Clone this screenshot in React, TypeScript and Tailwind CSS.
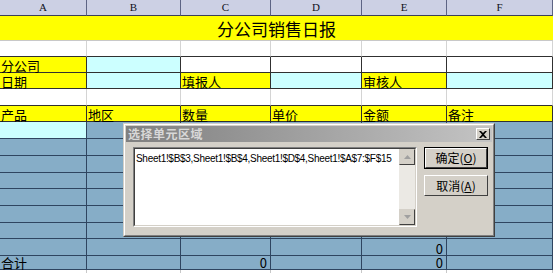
import React from "react";

const cols = ["A", "B", "C", "D", "E", "F"];

type C = { t?: string; cls: string; right?: boolean };

const Y = "bg-[#ffff00]";
const CY = "bg-[#ccffff]";
const W = "bg-white";
const BL = "bg-[#86adc7]";

function Cell({ c }: { c: C }) {
  return (
    <div
      className={`box-border border-r border-b whitespace-nowrap text-[13px] leading-[13px] text-black flex items-end ${
        c.right ? "justify-end pr-[3px]" : "pl-[1px]"
      } ${c.cls}`}
    >
      {c.t}
    </div>
  );
}

export default function App() {
  const light = "border-[#c8c8c8]";
  const dark = "border-[#303030]";
  const navy = "border-[#2f4560]";

  const row2: C[] = cols.map(() => ({ cls: `${W} border-r-[#d4d4d4] border-b-[#303030]` }));
  const row3: C[] = [
    { t: "分公司", cls: `${Y} ${dark}` },
    { cls: `${CY} ${dark}` },
    { cls: `${W} ${dark}` },
    { cls: `${W} ${dark}` },
    { cls: `${W} ${dark}` },
    { cls: `${W} ${dark}` },
  ];
  const row4: C[] = [
    { t: "日期", cls: `${Y} ${dark}` },
    { cls: `${CY} ${dark}` },
    { t: "填报人", cls: `${Y} ${dark}` },
    { cls: `${CY} ${dark}` },
    { t: "审核人", cls: `${Y} ${dark}` },
    { cls: `${CY} ${dark}` },
  ];
  const row5: C[] = cols.map(() => ({ cls: `${W} border-r-[#d4d4d4] border-b-[#303030]` }));
  const row6: C[] = ["产品", "地区", "数量", "单价", "金额", "备注"].map((t) => ({ t, cls: `${Y} ${dark}` }));
  const blueRow = (vals: (string | undefined)[], first?: boolean): C[] =>
    vals.map((t, i) => ({
      t,
      right: i > 0 && !!t,
      cls: `${first && i === 0 ? CY : BL} ${navy}`,
    }));
  const empty = [undefined, undefined, undefined, undefined, undefined, undefined];

  const rows: C[][] = [
    row2,
    row3,
    row4,
    row5,
    row6,
    blueRow(empty, true),
    blueRow(empty),
    blueRow(empty),
    blueRow(empty),
    blueRow(empty),
    blueRow(empty),
    blueRow(empty),
    blueRow([undefined, undefined, undefined, undefined, "0", undefined]),
    blueRow(["合计", undefined, "0", undefined, "0", undefined]),
  ];

  return (
    <div
      className="relative w-[553px] h-[273px] overflow-hidden bg-white"
      style={{ fontFamily: '"Noto Sans CJK SC", "Liberation Sans", sans-serif' }}
    >
      <div className="grid grid-cols-[87px_94px_90px_91px_85px_106px] grid-rows-[16px_25px_16px_16px_16px_17px_16px_17px_17px_17px_16px_17px_17px_16px_17px_14px_3px]">
        {cols.map((c) => (
          <div
            key={c}
            className="box-border border-r border-b border-r-[#5d6484] border-b-[#3a3f5a] bg-[#ccd0e4] flex items-center justify-center text-[11px] leading-none text-[#101020]"
            style={{ fontFamily: '"Liberation Serif", serif' }}
          >
            {c}
          </div>
        ))}
        <div className="col-span-6 box-border border-b border-b-[#c8c8c8] bg-[#ffff00] flex items-center justify-center text-[17px] leading-none text-black pt-[1px]">
          分公司销售日报
        </div>
        {rows.map((r, ri) => r.map((c, ci) => <Cell key={`${ri}-${ci}`} c={c} />))}
        {cols.map((c) => (
          <div key={`last-${c}`} className={`box-border border-r ${light} bg-white`} />
        ))}
      </div>

      {/* Dialog */}
      <div className="absolute left-[123px] top-[123px] w-[372px] h-[114px] box-border border border-t-[#d4d0c8] border-l-[#d4d0c8] border-r-[#404040] border-b-[#404040] bg-[#d4d0c8]">
        <div className="box-border h-full w-full border border-t-white border-l-white border-r-[#808080] border-b-[#808080] p-[1px] flex flex-col">
          <div className="h-[16px] flex items-center justify-between bg-gradient-to-r from-[#808080] to-[#c4c4c4] pl-[2px] pr-[2px]">
            <span className="text-[12px] leading-none font-bold text-[#d8d8d8] tracking-[0.5px]">选择单元区域</span>
            <div className="w-[14px] h-[12px] box-border border border-t-white border-l-white border-r-[#404040] border-b-[#404040] bg-[#d4d0c8] flex items-center justify-center">
              <svg width="8" height="7" viewBox="0 0 8 7">
                <path d="M0 0h2l2 2 2-2h2L5 3.5 8 7H6L4 5 2 7H0l3-3.5z" fill="#000" />
              </svg>
            </div>
          </div>
          <div className="flex mt-[5px] pl-[7px]">
            <div className="w-[284px] h-[80px] box-border border border-t-[#808080] border-l-[#808080] border-r-white border-b-white">
              <div className="h-full box-border border border-t-[#404040] border-l-[#404040] border-r-[#d4d0c8] border-b-[#d4d0c8] bg-white flex">
                <div
                  className="flex-1 min-w-0 text-[10px] tracking-[-0.3px] leading-[14px] text-black pl-[1px] pt-[3px] whitespace-nowrap overflow-hidden"
                  style={{ fontFamily: '"Liberation Sans", sans-serif' }}
                >
                  Sheet1!$B$3,Sheet1!$B$4,Sheet1!$D$4,Sheet1!$A$7:$F$15
                </div>
                <div className="w-[16px] shrink-0 bg-[#ebe9e4] flex flex-col justify-between">
                  <div className="w-[16px] h-[16px] box-border border border-t-[#d4d0c8] border-l-[#d4d0c8] border-r-[#404040] border-b-[#404040] bg-[#d4d0c8] flex items-center justify-center">
                    <svg width="7" height="4" viewBox="0 0 7 4"><path d="M3.5 0L7 4H0z" fill="#a0a0a0" /></svg>
                  </div>
                  <div className="w-[16px] h-[16px] box-border border border-t-[#d4d0c8] border-l-[#d4d0c8] border-r-[#404040] border-b-[#404040] bg-[#d4d0c8] flex items-center justify-center">
                    <svg width="7" height="4" viewBox="0 0 7 4"><path d="M0 0h7L3.5 4z" fill="#a0a0a0" /></svg>
                  </div>
                </div>
              </div>
            </div>
            <div className="flex flex-col ml-[7px] gap-[6px]">
              <div className="w-[64px] h-[22px] box-border border border-black">
                <div className="h-full box-border border border-t-white border-l-white border-r-[#404040] border-b-[#404040] bg-[#d4d0c8] flex items-center justify-center text-[12px] leading-none text-black">
                  确定(<span className="underline">O</span>)
                </div>
              </div>
              <div className="w-[64px] h-[21px] box-border border border-t-white border-l-white border-r-[#404040] border-b-[#404040] bg-[#d4d0c8] flex items-center justify-center text-[12px] leading-none text-black">
                取消(<span className="underline">A</span>)
              </div>
            </div>
          </div>
        </div>
      </div>
    </div>
  );
}
